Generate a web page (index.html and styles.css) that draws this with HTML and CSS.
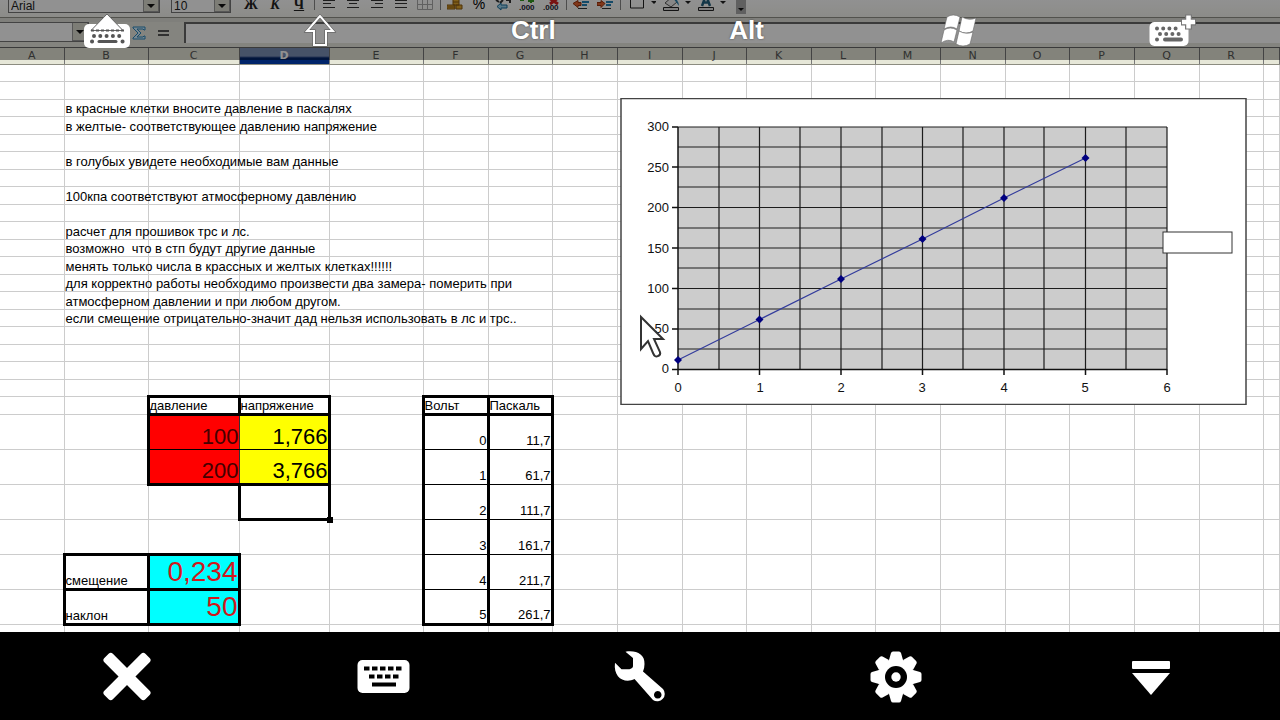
FILE: index.html
```html
<!DOCTYPE html>
<html lang="ru">
<head>
<meta charset="utf-8">
<meta name="viewport" content="width=device-width, initial-scale=1">
<title>Удалённый рабочий стол</title>
<link rel="stylesheet" href="styles.css">
</head>
<body>
<div class="app">
  <main class="desktop">
    <div class="toolbar">
      <div class="combo combo-font"><select aria-label="Шрифт"><option>Arial</option></select><span class="drop"></span></div>
      <div class="combo combo-size"><select aria-label="Размер шрифта"><option>10</option></select><span class="drop"></span></div>
      <button class="tool letter" aria-label="Полужирный">Ж</button>
      <button class="tool letter italic" aria-label="Курсив">К</button>
      <button class="tool letter underline" aria-label="Подчёркнутый">Ч</button>
      <span class="sep"></span>
      <button class="tool" aria-label="По левому краю"><svg width="16" height="16"><path d="M2 0.500h12M2 3.500h8M2 7.500h12" stroke="#333" /></svg></button>
      <button class="tool" aria-label="По центру"><svg width="16" height="16"><path d="M2 0.500h12M4 3.500h8M2 7.500h12" stroke="#333" /></svg></button>
      <button class="tool" aria-label="По правому краю"><svg width="16" height="16"><path d="M2 0.500h12M6 3.500h8M2 7.500h12" stroke="#333" /></svg></button>
      <button class="tool" aria-label="По ширине"><svg width="16" height="16"><path d="M2 0.500h12M2 3.500h12M2 7.500h12" stroke="#333" /></svg></button>
      <button class="tool" aria-label="Объединить ячейки"><svg width="16" height="16"><path d="M.5 -.5h15v10H.5zM.5 4.500h15M5.500 0v10M10.500 0v10" fill="none" stroke="#aaa" /></svg></button>
      <span class="sep"></span>
      <button class="tool" aria-label="Денежный формат"><svg width="16" height="16"><path d="M6-2h6v7H6zM0 5h8v4H0zM9 5h6v4H9z" fill="#e0a52d" stroke="#8a5a10" /><path d="M6 2h6M1 7h7" stroke="#8a5a10" /></svg></button>
      <button class="tool percent" aria-label="Процентный формат">%</button>
      <button class="tool" aria-label="Обычный формат"><svg width="18" height="16"><path d="M2 0l3 2M9 0l-3 3M12 0h4v3" fill="none" stroke="#333" stroke-width="2" /><path d="M3 6.500l4-3.500v2h6v3H7v2z" fill="#9fd4ee" stroke="#176d9c" /></svg></button>
      <button class="tool" aria-label="Добавить разряд"><svg width="18" height="16"><path d="M4 0v1M2 0h4M13 0v3M10 1h6" stroke="#349a20" stroke-width="2" /><text x="1" y="10" class="micro">.000</text></svg></button>
      <button class="tool" aria-label="Удалить разряд"><svg width="18" height="16"><path d="M7-2l9 6M16-2L8 4" stroke="#d32020" stroke-width="3" /><text x="1" y="10" class="micro">.000</text></svg></button>
      <span class="sep"></span>
      <button class="tool" aria-label="Уменьшить отступ"><svg width="16" height="16"><path d="M0 3.500l5-3v2h3v3H5v2z" fill="#e2622e" stroke="#9b3510" /><path d="M9 2h7M9 5h5" stroke="#2682b8" stroke-width="2" /><path d="M5 8.500h9" stroke="#333" /></svg></button>
      <button class="tool" aria-label="Увеличить отступ"><svg width="16" height="16"><path d="M8 3.500L4 .5v2H0v3h4v2z" fill="#e2622e" stroke="#9b3510" /><path d="M9 2h7M9 5h5" stroke="#2682b8" stroke-width="2" /><path d="M5 8.500h9" stroke="#333" /></svg></button>
      <span class="sep"></span>
      <button class="tool wide" aria-label="Обрамление"><svg width="30" height="16"><path d="M4.500-6h13v14h-13z" fill="none" stroke="#222" /><path d="M25 1h6l-3 3z" fill="#222" /></svg></button>
      <button class="tool wide" aria-label="Цвет фона"><svg width="30" height="16"><path d="M4 3l7-6 5 5-6 5z" fill="#eee" stroke="#555" /><path d="M12-2q5 0 6 8l-3-4" fill="#2e83ad" /><path d="M2.500 7.500h15v3h-15z" fill="#ddd" stroke="#222" /><path d="M24 1h6l-3 3z" fill="#222" /></svg></button>
      <button class="tool wide" aria-label="Цвет шрифта"><svg width="30" height="16"><path d="M6 6L10-5l4 11M7 2.500h6" fill="none" stroke="#23617f" stroke-width="2.500" /><path d="M2.500 7.500h15v3h-15z" fill="#ddd" stroke="#222" /><path d="M24 1h6l-3 3z" fill="#222" /></svg></button>
      <button class="tool more" aria-label="Ещё"><svg width="10" height="14"><path d="M2 8h6l-3 3z" fill="#111" /></svg></button>
    </div>
    <div class="formula-bar">
      <div class="combo combo-name"><input aria-label="Имя ячейки"><span class="drop"></span></div>
      <button class="fx" aria-label="Сумма"><svg width="14" height="14"><path d="M1 1h12v3h-1L11 3H5l4 4-4 4h6l1-1h1v3H1v-1l5-5-5-5z" fill="#d5efff" stroke="#2b86bd" /></svg></button>
      <button class="fx" aria-label="Функция"><svg width="14" height="14"><path d="M1 5h11M1 9h11" stroke="#555" stroke-width="2" /></svg></button>
      <input class="formula" aria-label="Строка ввода">
    </div>

    <div class="sheet">
      <table class="grid">
        <colgroup id="cols"></colgroup>
        <thead><tr id="heads"></tr></thead>
        <tbody id="rows"></tbody>
      </table>
    </div>

    <svg class="chart" width="627" height="307" viewBox="0 0 627 307" role="img" aria-label="Зависимость давления от напряжения">
      <rect x="1" y="0.500" width="625" height="306" fill="#fff" stroke="#444" stroke-width="1.500" />
      <rect x="58" y="29" width="489" height="242" fill="#ccc" />
      <path class="minor" d="M58 29h489M58 49h489M58 69h489M58 89h489M58 109.500h489M58 130h489M58 150h489M58 170h489M58 190.500h489M58 211h489M58 231h489M58 251h489M99 29v242M139.500 29v242M180 29v242M221 29v242M262 29v242M302.500 29v242M343 29v242M384 29v242M424 29v242M465.500 29v242M506 29v242M547 29v242" />
      <path class="axis" d="M58 29v248M52 271.500h495M52 29h6M52 69h6M52 109.500h6M52 150h6M52 190.500h6M52 231h6M139.500 271v6M221 271v6M302.500 271v6M384 271v6M465.500 271v6M547 271v6" />
      <path d="M58 262L139.500 221.500 221 181 302.500 141 384 100 465.500 60" fill="none" stroke="#333c9c" stroke-width="1.200" />
      <path fill="#000080" d="M58 258l4 4-4 4-4-4zM139.500 217.500l4 4-4 4-4-4zM221 177l4 4-4 4-4-4zM302.500 137l4 4-4 4-4-4zM384 96l4 4-4 4-4-4zM465.500 56l4 4-4 4-4-4z" />
      <g class="tick end">
        <text x="49" y="33">300</text><text x="49" y="74">250</text><text x="49" y="114">200</text><text x="49" y="155">150</text><text x="49" y="195">100</text><text x="49" y="235">50</text><text x="49" y="275">0</text>
      </g>
      <g class="tick mid">
        <text x="58" y="294">0</text><text x="140" y="294">1</text><text x="221" y="294">2</text><text x="302" y="294">3</text><text x="384" y="294">4</text><text x="465" y="294">5</text><text x="547" y="294">6</text>
      </g>
      <rect x="543" y="134" width="69" height="21" fill="#fff" stroke="#333" />
    </svg>

    <svg class="pointer" width="28" height="46" viewBox="0 0 28 46" aria-hidden="true"><path d="M3 3v32l7-8 5 12q2 5 5 3 3-1 2-4l-6-13h9z" fill="#fff" stroke="#333" stroke-width="2" /></svg>

    <div class="keys">
      <button aria-label="Показать клавиатуру"><svg width="60" height="60"><rect x="7" y="24" width="46" height="24" rx="5" fill="#fff" /><path d="M30 14L14 30.500h32z" fill="#fff" stroke="#666" /><path d="M14 30.500h33" stroke="#555" stroke-width="2" stroke-dasharray="3 2" /><path d="M17 36h28" stroke="#555" stroke-width="4" stroke-linecap="round" stroke-dasharray="0 6.300" /><path d="M15 41.500h.1M45.500 41.500h.1" stroke="#555" stroke-width="4" stroke-linecap="round" /><path d="M22 41.500h17" stroke="#555" stroke-width="3" stroke-linecap="round" /></svg></button>
      <button aria-label="Shift"><svg width="60" height="60"><path d="M30 16L17 31h7v14h12V31h7z" fill="none" stroke="#555" stroke-width="3" /><path d="M30 16L17 31h7v14h12V31h7z" fill="none" stroke="#fff" stroke-width="2" /></svg></button>
      <button>Ctrl</button>
      <button>Alt</button>
      <button aria-label="Windows"><svg width="60" height="60"><g fill="#fff" stroke="#666" stroke-width=".6"><path d="M17 17q6-4 13 0l-3 12q-6-4-13 0z" /><path d="M32 17q7 4 14 1l-3 13q-7 4-14 0z" /><path d="M14 30q6-4 13 0l-3 12q-6-4-13 1z" /><path d="M29 31q7 4 14 1l-3 12q-7 4-14 0z" /></g></svg></button>
      <button aria-label="Дополнительные клавиши"><svg width="60" height="60"><rect x="6.500" y="22" width="39" height="24" rx="5" fill="#fff" /><path d="M14 28.500h19M17 34h19M14 39.500h.1" stroke="#666" stroke-width="4" stroke-linecap="round" stroke-dasharray="0 6.200" /><path d="M22 39.500h16" stroke="#666" stroke-width="4" stroke-linecap="round" /><path d="M45.500 14.500v15M38 22h15" stroke="#777" stroke-width="7" /><path d="M45.500 15.500v13M39 22h13" stroke="#fff" stroke-width="4.500" /></svg></button>
    </div>
  </main>

  <nav class="dock">
    <button aria-label="Закрыть"><svg width="64" height="88"><g fill="#fff" transform="translate(31 44.500)"><rect x="-29" y="-6" width="58" height="12" rx="3" transform="rotate(45)" /><rect x="-29" y="-6" width="58" height="12" rx="3" transform="rotate(-45)" /></g></svg></button>
    <button aria-label="Клавиатура"><svg width="64" height="88"><rect x="5.500" y="28" width="52" height="33" rx="5" fill="#fff" /><path d="M12 36.500h38M17 44.500h31" stroke="#000" stroke-width="4" stroke-dasharray="5.500 2.500" /><path d="M20 52.500h24" stroke="#000" stroke-width="4" /></svg></button>
    <button aria-label="Настройка"><svg width="64" height="88"><path fill="#fff" fill-rule="evenodd" d="M17.500 19.700C28 18 37 22 36.500 32q0 4-1.500 7.500L55 57a7.500 7.500 0 0 1-10 11L26.500 47C17 52 5 46 7 30.700l6.500 6.500h8q4-1 3.500-4.200v-7zM49.700 59a3.800 3.800 0 1 0 .1 0z" /></svg></button>
    <button aria-label="Параметры"><svg width="64" height="88"><g transform="translate(32 45)"><g fill="#fff"><path id="tooth" d="M-7-17L-5-24q.5-1.500 2-1.500h6q1.500 0 2 1.500L7-17z" /><use href="#tooth" transform="rotate(45)" /><use href="#tooth" transform="rotate(90)" /><use href="#tooth" transform="rotate(135)" /><use href="#tooth" transform="rotate(180)" /><use href="#tooth" transform="rotate(225)" /><use href="#tooth" transform="rotate(270)" /><use href="#tooth" transform="rotate(315)" /><circle r="18.500" /></g><circle r="11" /><circle r="4.700" fill="#fff" /></g></svg></button>
    <button aria-label="Скрыть панель"><svg width="64" height="88"><rect x="12" y="29" width="38" height="8" rx="1" fill="#fff" /><path d="M12 41h38L31 63z" fill="#fff" /></svg></button>
  </nav>
</div>
<script src="sheet.js"></script>
</body>
</html>
```

FILE: styles.css
```css
* { box-sizing: border-box; }

body {
  margin: 0;
  font-family: "Liberation Sans", Arial, sans-serif;
  font-size: 13px;
  color: #000;
  background: #000;
}

button {
  padding: 0;
  border: 0;
  background: none;
  font: inherit;
  color: inherit;
}

svg { display: block; }

.app {
  display: flex;
  flex-direction: column;
  height: 100vh;
}

.desktop {
  position: relative;
  flex: 1;
  min-height: 0;
  overflow: hidden;
  background: #fff;
}

/* Toolbars */
.toolbar {
  display: flex;
  align-items: flex-start;
  height: 18px;
  padding-left: 8px;
  background: linear-gradient(#fff, #f6f6f0);
  border-bottom: 1px solid #909088;
}

.combo {
  display: flex;
  height: 13px;
  border: 1px solid #777;
  border-top: 0;
  background: #fff;
}

.combo select,
.combo input {
  flex: 1;
  min-width: 0;
  height: 12px;
  padding: 0 2px;
  border: 0;
  appearance: none;
  background: none;
  font: 12px/10px "Liberation Sans", sans-serif;
  color: #222;
}

.combo-font { width: 152px; margin-right: 11px; }
.combo-size { width: 60px; margin-right: 8px; }

.drop {
  display: flex;
  align-items: center;
  justify-content: center;
  width: 16px;
  background: #dcdccf;
  border: 1px solid #999;
  border-top: 0;
}

.drop::before {
  content: "";
  border: 4px solid transparent;
  border-top-color: #111;
  border-bottom: 0;
}

.tool {
  display: flex;
  justify-content: center;
  flex: none;
  width: 24px;
}

.wide { width: 35px; }
.more { width: 10px; margin-left: 8px; background: #aaa; }
.percent { font-size: 14px; line-height: 9px; }

.letter {
  font: bold 14px/10px "Liberation Serif", serif;
  color: #222;
}

.italic { font-style: italic; }
.underline { text-decoration: underline; }
.micro { font: bold 8px "Liberation Sans", sans-serif; fill: #223; }

.sep {
  flex: none;
  width: 6px;
  height: 10px;
  background: linear-gradient(#888, #888) center / 1px 100% no-repeat;
}

.formula-bar {
  display: flex;
  align-items: flex-start;
  height: 30px;
  background: #e8e8e0;
  border-top: 4px solid #e0e0d8;
  border-bottom: 1px solid #666;
}

.combo-name { width: 89px; height: 20px; margin-right: 42px; border: 1px solid #777; border-left: 0; }
.fx { width: 25px; padding: 4px 0 0 1px; }

.formula {
  flex: 1;
  height: 21px;
  margin-left: 3px;
  border: 0;
  border-top: 2px solid #666;
  border-left: 2px solid #666;
  background: #fff;
}

/* Spreadsheet */
.sheet { overflow: hidden; }

.grid {
  width: 100%;
  table-layout: fixed;
  border-collapse: collapse;
}

.grid th {
  height: 16px;
  padding: 0;
  border-right: 1px solid #777;
  border-bottom: 1px solid #8c8c80;
  background: #e6e7d8;
  font: 11px/14px "DejaVu Sans", sans-serif;
  color: #555;
}

.grid th.current {
  background: linear-gradient(#7c90b8 0 8px, #00246a 10px);
  color: #fff;
  font-weight: bold;
}

.grid td {
  height: 17px;
  padding: 0 1px;
  border-right: 1px solid #ccc;
  border-bottom: 1px solid #ccc;
  line-height: 15px;
  white-space: pre;
  vertical-align: bottom;
}

.grid tr:nth-child(even) td { height: 18px; }
.grid tr.tall td { height: 35px; }
.grid tr.title td { height: 17px; }
.grid td.num { padding-right: 0; text-align: right; }

.grid td.box { padding: 0; border: 3px solid #000; }
.grid td.list { border-left: 3px solid #000; border-right: 3px solid #000; border-bottom: 1px solid #000; line-height: 17px; }
.grid td.last { border-bottom: 3px solid #000; }

.grid td.red,
.grid td.yellow { border-bottom: 1px solid #000; font-size: 22px; line-height: 25px; }
.grid td.red { background: #f00; border-left: 3px solid #000; border-right: 1px solid #333; color: #400; }
.grid td.yellow { background: #ff0; border-right: 3px solid #000; }
.grid td.red.last,
.grid td.yellow.last { border-bottom: 3px solid #000; }
.grid td.cyan { background: #0ff; color: #d0181c; font-size: 28px; line-height: 32px; }
.grid td.active { position: relative; }

.handle {
  position: absolute;
  right: -5px;
  bottom: -5px;
  width: 6px;
  height: 6px;
  background: #000;
}

/* Floating objects */
.chart { position: absolute; left: 620px; top: 98px; }
.minor { fill: none; stroke: #1c1c1c; stroke-width: 1.2; }
.axis { fill: none; stroke: #111; stroke-width: 1.5; }
.tick { font-size: 13px; fill: #111; }
.end { text-anchor: end; }
.mid { text-anchor: middle; }
.pointer { position: absolute; left: 638px; top: 314px; }

/* Modifier keys over the desktop */
.keys {
  position: absolute;
  inset: 0 0 auto;
  display: grid;
  grid-template-columns: repeat(6, 1fr);
  height: 60px;
  background: rgba(0, 0, 0, 0.43);
}

.keys button {
  display: flex;
  align-items: center;
  justify-content: center;
  font-size: 26px;
  line-height: 30px;
  font-weight: bold;
  color: #fff;
  text-shadow: 0 0 2px #444;
}

/* Bottom dock */
.dock {
  display: grid;
  grid-template-columns: repeat(5, 1fr);
  height: 88px;
  background: #000;
}

.dock button { display: flex; justify-content: center; }
```

FILE: sheet.js
```js
const widths = [64, 84, 91, 90, 94, 65, 64, 65, 65, 64, 65, 64, 65, 65, 64, 65, 65, 64];
const letters = 'ABCDEFGHIJKLMNOPQR';
const rowCount = 27;

const cells = {
  B3: ['в красные клетки вносите давление в паскалях'],
  B4: ['в желтые- соответствующее давлению напряжение'],
  B6: ['в голубых увидете необходимые вам данные'],
  B8: ['100кпа соответствуют атмосферному давлению'],
  B10: ['расчет для прошивок трс и лс.'],
  B11: ['возможно  что в стп будут другие данные'],
  B12: ['менять только числа в крассных и желтых клетках!!!!!!'],
  B13: ['для корректно работы необходимо произвести два замера- померить при'],
  B14: ['атмосферном давлении и при любом другом.'],
  B15: ['если смещение отрицательно-значит дад нельзя использовать в лс и трс..'],
  C20: ['давление', 'box'],
  D20: ['напряжение', 'box'],
  F20: ['Вольт', 'box'],
  G20: ['Паскаль', 'box'],
  C21: ['100', 'num red'],
  D21: ['1,766', 'num yellow'],
  C22: ['200', 'num red last'],
  D22: ['3,766', 'num yellow last'],
  D23: ['', 'box active'],
  B25: ['смещение', 'box'],
  C25: ['0,234', 'box num cyan'],
  B26: ['наклон', 'box'],
  C26: ['50', 'box num cyan']
};

['11,7', '61,7', '111,7', '161,7', '211,7', '261,7'].forEach((value, volt) => {
  const style = volt === 5 ? 'num list last' : 'num list';
  cells['F' + (21 + volt)] = [String(volt), style];
  cells['G' + (21 + volt)] = [value, style];
});

const cols = document.getElementById('cols');
const heads = document.getElementById('heads');
const rows = document.getElementById('rows');

widths.forEach((width, i) => {
  const col = document.createElement('col');
  col.style.width = width + 'px';
  cols.append(col);
  const th = document.createElement('th');
  th.textContent = letters[i];
  if (letters[i] === 'D') th.className = 'current';
  heads.append(th);
});
cols.append(document.createElement('col'));
heads.append(document.createElement('th'));

for (let r = 1; r <= rowCount; r++) {
  const tr = document.createElement('tr');
  if (r === 20) tr.className = 'title';
  if (r > 20) tr.className = 'tall';
  for (let c = 0; c <= letters.length; c++) {
    const td = document.createElement('td');
    const cell = cells[letters[c] + r];
    if (cell) {
      td.textContent = cell[0];
      td.className = cell[1] || '';
    }
    if (td.classList.contains('active')) {
      const handle = document.createElement('span');
      handle.className = 'handle';
      td.append(handle);
    }
    tr.append(td);
  }
  rows.append(tr);
}
```
